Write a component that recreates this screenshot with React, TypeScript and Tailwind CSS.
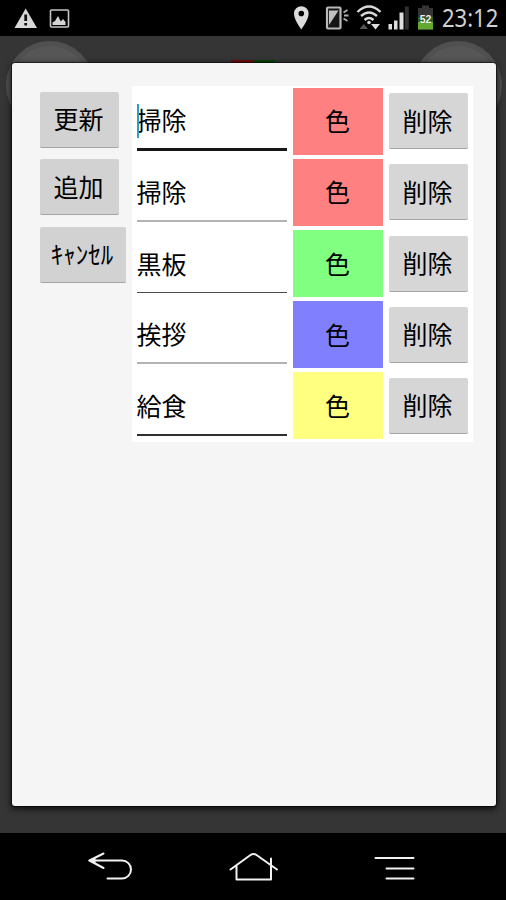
import { useState } from "react"

interface Task {
    id: number;
    name: string;
    color: string;
    line: string;
}

const initialTasks: Task[] = [
    { id: 1, name: "掃除", color: "bg-[#ff8080]", line: "h-[3px] bg-[#161616]" },
    { id: 2, name: "掃除", color: "bg-[#ff8080]", line: "h-[2px] bg-[#b4b4b4]" },
    { id: 3, name: "黒板", color: "bg-[#80ff80]", line: "h-[1.5px] bg-[#4c4c4c]" },
    { id: 4, name: "挨拶", color: "bg-[#8080ff]", line: "h-[2px] bg-[#b4b4b4]" },
    { id: 5, name: "給食", color: "bg-[#ffff80]", line: "h-[2px] bg-[#303030]" },
];

const buttonStyle = "h-[56px] shrink-0 rounded-[2px] border-b border-b-[#a4a4a4] pr-[1px] pb-[1px] text-[25px] leading-none text-black whitespace-nowrap";

function StatusBar() {
    return (
        <header className="flex h-9 shrink-0 items-center bg-black">
            <svg width="90" height="36" viewBox="0 0 90 36">
                <path d="M25.700 8.500 37 28H14.500z" fill="#d8d8d8" />
                <path d="M25.700 14.500v6.500M25.700 23v2.500" stroke="#111" strokeWidth="2.800" />
                <rect x="50.500" y="10" width="18" height="17" rx="1" fill="none" stroke="#c4c4c4" strokeWidth="1.600" />
                <path d="M52.500 25v-2.500l2.500-1.500 3-5 2.800 5.500 2.200-2.500 2.500 3V25z" fill="#d4d4d4" />
            </svg>
            <div className="flex-1" />
            <svg width="156" height="36" viewBox="285 0 156 36">
                {/* location */}
                <path fillRule="evenodd" d="M301.300 29.500C298.500 25 294 19 294 13.500a7.300 7.300 0 0 1 14.600 0c0 5.500-4.500 11.500-7.300 16zM301.300 10.700a2.800 2.800 0 1 0 0 5.600 2.800 2.800 0 0 0 0-5.600z" fill="#dcdcdc" />
                {/* vibrating phone */}
                <rect x="327" y="7.500" width="13.500" height="21" rx="1" fill="#151515" stroke="#b8b8b8" strokeWidth="2.200" />
                <path d="M329 10.500h9.500L329 25z" fill="#c0c0c0" />
                <path d="M343.500 12.500l4-2.500M344 15.500h4.500M343.500 18.500l4 2.500" stroke="#b0b0b0" strokeWidth="1.800" />
                {/* wifi */}
                <g fill="none" stroke="#d8d8d8" strokeWidth="2.400">
                    <path d="M357.500 12q11.500-11 23 0M361 16q8-7 16 0M364.500 20q4.500-4 9 0" />
                </g>
                <circle cx="369" cy="22.500" r="1.800" fill="#d8d8d8" />
                <path d="M359.500 29l4.200-5 4.300 5z" fill="#555" />
                <path d="M371 24h9l-4.500 5.500z" fill="#dedede" />
                {/* signal */}
                <path d="M388.500 24h3.500v5.500h-3.500zM394 20.500h3.500v9H394zM399.500 12.500h4v17h-4z" fill="#dedede" />
                <path d="M404.800 6.500h4v23h-4z" fill="#303030" />
                {/* battery */}
                <path d="M422 5.500h7v2.500h4v21.500h-15V8h4z" fill="#353535" />
                <path d="M418 22h15v7.500h-15z" fill="#62a831" />
                <path d="M418 17h15v5h-15z" fill="#315c20" />
                <text x="425.500" y="22.500" textAnchor="middle" fontFamily="Liberation Sans" fontWeight="700" fontSize="10.500" fill="#eee">52</text>
            </svg>
            <span className="w-[65px] origin-left scale-x-[0.9] pl-[1px] font-['Noto_Sans'] text-[24.500px] leading-none text-[#d0d0d0]">23:12</span>
        </header>
    )
}

function NavBar() {
    return (
        <nav className="h-[67px] shrink-0 bg-black">
            <svg width="506" height="67" viewBox="0 833 506 67" fill="none" stroke="#f2f2f2" strokeWidth="2" strokeLinecap="round" strokeLinejoin="round">
                <path d="M103.500 853.500 89.500 860.500 103.500 868M90 860.500H122a9 9 0 0 1 0 18H107.500" />
                <path d="M89 860.500 95 857.800V863.200z" fill="#f2f2f2" strokeWidth="1" />
                <path d="M230.500 869.500 250.500 855q3-2 6 0L277 869.500M236.500 866v13.500h34.500V858.500" />
                <path d="M375.500 858H413.500M386.500 868.500H413.500M386.500 878.500H413.500" />
            </svg>
        </nav>
    )
}

export default function App() {

    const [tasks, setTasks] = useState<Task[]>(initialTasks);

    const addTask = () => {
        setTasks([...tasks, { id: Date.now(), name: "", color: "bg-[#ff8080]", line: "h-[2px] bg-[#b4b4b4]" }]);
    };

    return (
        <div className="flex h-[900px] w-[506px] flex-col overflow-hidden bg-black font-['Noto_Sans_CJK_JP',sans-serif]">
            <StatusBar />

            <main className="relative min-h-0 flex-1 bg-[#353535] pt-[26.600px] pl-[11.500px]">
                {/* dimmed page behind the dialog */}
                <div className="absolute top-[5px] left-[6px] size-[88px] rounded-full border-[5px] border-[#505050] bg-[#565656]" />
                <div className="absolute top-[5px] left-[414px] size-[88px] rounded-full border-[5px] border-[#505050] bg-[#565656]" />
                <div className="absolute top-[24px] left-[231px] flex">
                    <div className="h-[3px] w-[22px] bg-[#700b0b]" />
                    <div className="h-[3px] w-[22px] bg-[#07420b]" />
                </div>

                <div className="relative flex h-[743px] w-[484.500px] items-start rounded-[3px] bg-[#f5f5f5] pt-[23px] pl-7 shadow-[0_0_0_1px_rgba(0,0,0,0.5),0_2px_6px_1px_rgba(0,0,0,0.75)]">
                    <div className="flex w-[92px] shrink-0 flex-col items-start gap-[11.5px] pt-[6px]">
                        <button className={`${buttonStyle} w-[79px] bg-[#d2d2d2]`}>更新</button>
                        <button className={`${buttonStyle} w-[79px] bg-[#d2d2d2]`} onClick={addTask}>追加</button>
                        <button className={`${buttonStyle} w-[86px] bg-[#d2d2d2]`}>ｷｬﾝｾﾙ</button>
                    </div>

                    <div className="w-[341px] bg-white">
                        {tasks.map((task, index) => (
                            <div key={task.id} className="flex h-[71.200px] items-center pl-[5px]">
                                <div className="relative flex h-full w-[150px] flex-col justify-end pb-[6px]">
                                    {index === 0 && <div className="absolute top-[18px] left-0 h-[34px] w-[2px] bg-[#2b9fc6]" />}
                                    <span className="mb-[16px] text-[25px] leading-[25px] text-black">{task.name}</span>
                                    <div className={`w-full ${task.line}`} />
                                </div>
                                <button className={`ml-[6px] h-[67px] w-[90px] pb-[1px] text-[25px] leading-none text-black ${task.color}`}>色</button>
                                <button
                                    className={`${buttonStyle} ml-[6px] w-[79px] bg-[#d6d6d6]`}
                                    onClick={() => setTasks(tasks.filter((t) => t.id !== task.id))}
                                >
                                    削除
                                </button>
                            </div>
                        ))}
                    </div>
                </div>
            </main>

            <NavBar />
        </div>
    )
}
